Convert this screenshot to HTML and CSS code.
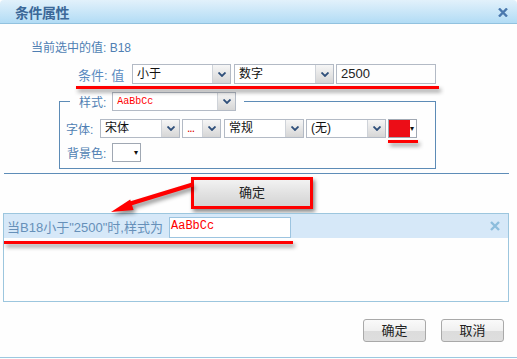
FILE: index.html
```html
<html>

<head>
	<title>条件属性</title>
	<link rel="stylesheet" href="styles.css">
</head>

<body>
	<div class="dialog">
		<div class="titlebar">
			<span class="title">条件属性</span>
			<svg class="close" width="10" height="9" viewBox="0 0 10 9"><path d="M1 0.5 L9 8.5 M9 0.5 L1 8.5" stroke="#4a78ad" stroke-width="2.4"/></svg>
		</div>

		<div class="current">当前选中的值: B18</div>

		<div class="cond-row">
			<span class="label cond-label">条件: 值</span>
			<div class="sel w99"><span class="val">小于</span><span class="drop"><svg width="8" height="5" viewBox="0 0 8 5"><path d="M0.5 0.5 L4 4 L7.5 0.5" stroke="#2f4f7a" stroke-width="1.8" fill="none"/></svg></span></div>
			<div class="sel w100 gap3"><span class="val">数字</span><span class="drop"><svg width="8" height="5" viewBox="0 0 8 5"><path d="M0.5 0.5 L4 4 L7.5 0.5" stroke="#2f4f7a" stroke-width="1.8" fill="none"/></svg></span></div>
			<div class="text-input">2500</div>
		</div>

		<fieldset class="style-box">
			<legend class="style-legend">
				<span class="label">样式:</span>
				<div class="sel legend-sel"><span class="val sample-small">AaBbCc</span><span class="drop"><svg width="8" height="5" viewBox="0 0 8 5"><path d="M0.5 0.5 L4 4 L7.5 0.5" stroke="#2f4f7a" stroke-width="1.8" fill="none"/></svg></span></div>
			</legend>

			<div class="font-row">
				<span class="label font-label">字体:</span>
				<div class="sel s19 w80"><span class="val">宋体</span><span class="drop"><svg width="8" height="5" viewBox="0 0 8 5"><path d="M0.5 0.5 L4 4 L7.5 0.5" stroke="#2f4f7a" stroke-width="1.8" fill="none"/></svg></span></div>
				<div class="sel s19 w39 gap2"><span class="val dots">...</span><span class="drop"><svg width="8" height="5" viewBox="0 0 8 5"><path d="M0.5 0.5 L4 4 L7.5 0.5" stroke="#2f4f7a" stroke-width="1.8" fill="none"/></svg></span></div>
				<div class="sel s19 w80 gap3"><span class="val">常规</span><span class="drop"><svg width="8" height="5" viewBox="0 0 8 5"><path d="M0.5 0.5 L4 4 L7.5 0.5" stroke="#2f4f7a" stroke-width="1.8" fill="none"/></svg></span></div>
				<div class="sel s19 w80 gap2"><span class="val">(无)</span><span class="drop"><svg width="8" height="5" viewBox="0 0 8 5"><path d="M0.5 0.5 L4 4 L7.5 0.5" stroke="#2f4f7a" stroke-width="1.8" fill="none"/></svg></span></div>
				<div class="color-pick gap2"><span class="swatch red"></span><span class="tri">▾</span></div>
			</div>

			<div class="bg-row">
				<span class="label bg-label">背景色:</span>
				<div class="color-pick"><span class="swatch"></span><span class="tri">▾</span></div>
			</div>
		</fieldset>

		<div class="divider"></div>

		<div class="apply-row">
			<div class="mark-box"><div class="apply-btn">确定</div></div>
		</div>

		<div class="preview">
			<div class="preview-head">
				<span class="preview-text">当B18小于"2500"时,样式为</span>
				<span class="sample-box">AaBbCc</span>
				<svg class="preview-close" width="10" height="10" viewBox="0 0 10 10"><path d="M1 1 L9 9 M9 1 L1 9" stroke="#8dbddc" stroke-width="2.4"/></svg>
			</div>
		</div>

		<div class="footer">
			<div class="btn">确定</div>
			<div class="btn">取消</div>
		</div>

		<div class="bottom-line"></div>

		<!-- red marks drawn on top of the dialog -->
		<svg class="marks" width="517" height="359" viewBox="0 0 517 359">
			<g fill="#f00" stroke="none">
				<rect x="76" y="86" width="363" height="3"/>
				<rect x="388" y="140" width="30" height="3"/>
				<rect x="4" y="241" width="289" height="3"/>
				<path d="M192 182.5 L193.5 186.5 L128 206.5 L126.5 202.5 Z"/>
				<path d="M111 212 L130.2 199.6 L133.6 210 Z"/>
			</g>
		</svg>
	</div>
</body>

</html>
```

FILE: styles.css
```css
body {
	margin: 0;
	padding: 0;
	background-color: #fff;
	font-family: "Liberation Sans", "Noto Sans CJK SC", sans-serif;
	font-size: 12px;
}

.dialog {
	position: relative;
	width: 517px;
	height: 359px;
	background-color: #fefefe;
	overflow: hidden;
}

.titlebar {
	height: 23px;
	border-bottom: 1px solid #92c2df;
	border-radius: 4px 4px 0 0;
	background: linear-gradient(#e2f1fb, #b2dcf5);
	display: flex;
	align-items: center;
	padding-left: 15px;
}

.title {
	font-size: 14px;
	font-weight: bold;
	color: #3b6898;
	letter-spacing: -0.5px;
}

.close {
	margin-left: auto;
	margin-right: 9px;
	margin-top: 1px;
}

.label {
	color: #4f7fb3;
	white-space: nowrap;
}

.current {
	margin-top: 16px;
	margin-left: 31px;
	line-height: 16px;
	color: #4f7fb3;
}

.cond-row {
	display: flex;
	align-items: center;
	margin-top: 8px;
	height: 20px;
}

.cond-label {
	margin-left: 78px;
	width: 54px;
	color: #5a8bc0;
	font-size: 13px;
}

/* fake select boxes */
.sel {
	display: flex;
	box-sizing: border-box;
	height: 20px;
	border: 1px solid #b3bac5;
	background-color: #fff;
}

.sel .val {
	flex: 1;
	padding-left: 4px;
	line-height: 18px;
	color: #111;
	overflow: hidden;
	white-space: nowrap;
}

.sel .drop {
	width: 17px;
	border-left: 1px solid #cfd3d9;
	background: linear-gradient(#f6f6f6, #e6e6e6 50%, #d6d6d6);
	display: flex;
	align-items: center;
	justify-content: center;
}

.s19 {
	height: 19px;
}

.s19 .val {
	line-height: 17px;
}

.w99 { width: 99px; }
.w100 { width: 100px; }
.w80 { width: 80px; }
.w39 { width: 39px; }
.gap2 { margin-left: 2px; }
.gap3 { margin-left: 3px; }

.text-input {
	box-sizing: border-box;
	width: 100px;
	height: 20px;
	margin-left: 2px;
	border: 1px solid #b3bac5;
	padding-left: 4px;
	line-height: 18px;
	font-size: 13px;
	color: #222;
}

.style-box {
	margin: 8px 0 0 59px;
	width: 377px;
	box-sizing: border-box;
	border: 1px solid #5d8bb6;
	padding: 8px 0 6px 6px;
	min-width: 0;
}

.style-legend {
	display: flex;
	align-items: center;
	margin-left: 4px;
	padding: 0 8px 0 9px;
	height: 19px;
}

.legend-sel {
	width: 124px;
	height: 19px;
	margin-left: 6px;
}

.legend-sel .val {
	line-height: 17px;
}

.sample-small {
	font-family: "Liberation Mono", monospace;
	font-size: 10px;
	color: #f00 !important;
}

.font-row {
	display: flex;
	align-items: center;
	height: 19px;
}

.font-label {
	width: 34px;
}

.dots {
	color: #d00 !important;
	letter-spacing: -1px;
}

.color-pick {
	box-sizing: border-box;
	display: flex;
	align-items: center;
	width: 29px;
	height: 19px;
	border: 1px solid #a0a8b3;
	background-color: #fff;
}

.swatch {
	width: 21px;
	height: 17px;
}

.swatch.red {
	background-color: #ec0d17;
}

.tri {
	font-size: 8px;
	line-height: 8px;
	color: #111;
	margin-left: 0;
}

.bg-row {
	display: flex;
	align-items: center;
	height: 19px;
	margin-top: 5px;
}

.bg-label {
	margin-left: 1px;
	width: 45px;
}

.divider {
	margin: 4px 0 0 4px;
	width: 505px;
	height: 1px;
	background-color: #5e8db8;
}

.apply-row {
	margin-top: 3px;
	padding-left: 191px;
}

.mark-box {
	box-sizing: border-box;
	width: 122px;
	height: 32px;
	border: 3px solid #f00;
	box-shadow: 2px 3px 4px rgba(0, 0, 0, 0.45);
}

.apply-btn {
	height: 26px;
	line-height: 26px;
	text-align: center;
	font-size: 13px;
	color: #222;
	background: linear-gradient(#f2f2f2, #e2e2e2 50%, #d4d4d4);
}

.preview {
	margin: 4px 0 0 3px;
	width: 506px;
	height: 89px;
	box-sizing: border-box;
	border: 1px solid #9cc6de;
}

.preview-head {
	display: flex;
	align-items: center;
	height: 24px;
	background-color: #d6e8f8;
	padding-left: 3px;
}

.preview-text {
	color: #6690b9;
	font-size: 13px;
	width: 162px;
	white-space: nowrap;
}

.sample-box {
	box-sizing: border-box;
	width: 122px;
	height: 21px;
	margin-top: 2px;
	border: 1px solid #9cc4e0;
	background-color: #fff;
	font-family: "Liberation Mono", monospace;
	font-size: 12px;
	line-height: 17px;
	color: #f00;
	padding-left: 1px;
}

.preview-close {
	margin-left: auto;
	margin-right: 8px;
}

.footer {
	display: flex;
	justify-content: flex-end;
	gap: 15px;
	margin-top: 17px;
	padding-right: 13px;
}

.btn {
	box-sizing: border-box;
	width: 63px;
	height: 23px;
	border: 1px solid #a9a9a9;
	border-radius: 3px;
	background: linear-gradient(#fafafa, #f0f0f0 50%, #dcdcdc 50%, #dedede);
	text-align: center;
	line-height: 21px;
	font-size: 13px;
	color: #222;
}

.bottom-line {
	margin-top: 15px;
	height: 1px;
	background-color: #9cc8e0;
}

.marks {
	position: absolute;
	left: 0;
	top: 0;
	pointer-events: none;
	filter: drop-shadow(2px 3px 2px rgba(0, 0, 0, 0.45));
}
```
